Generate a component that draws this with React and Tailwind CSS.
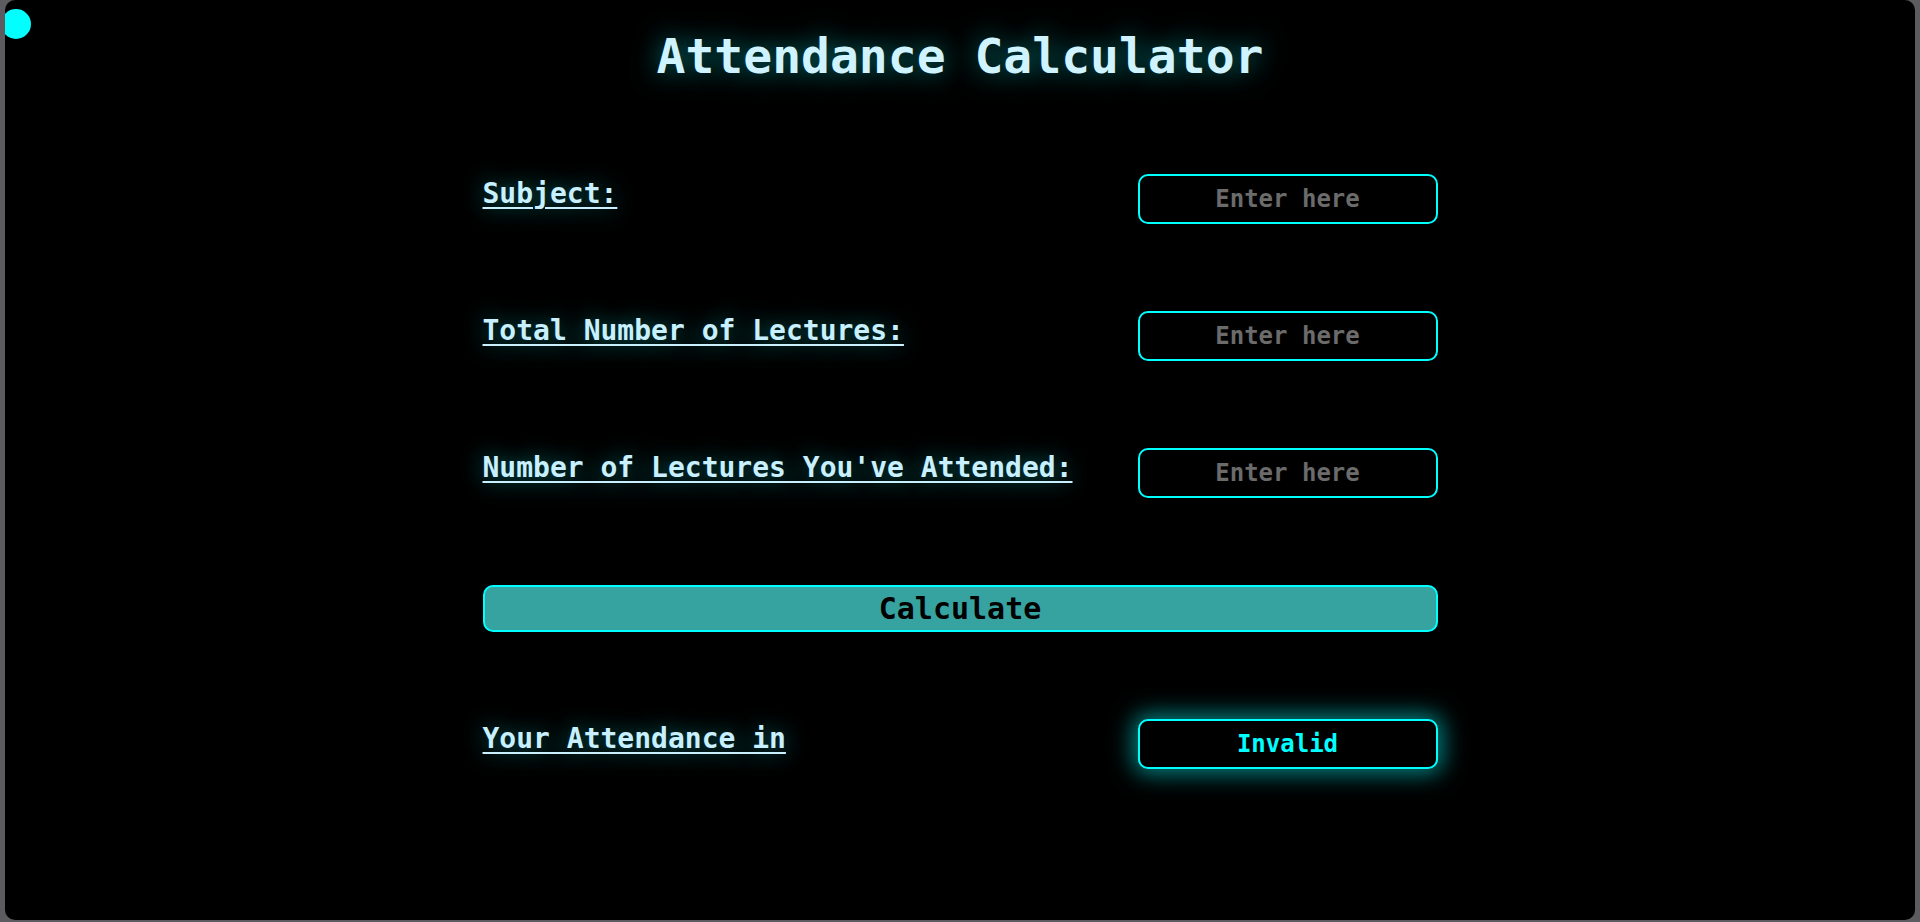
import React, { useState } from 'react'

const mono = { fontFamily: '"DejaVu Sans Mono", "Liberation Mono", monospace' }

function Field({ label, placeholder, value, onChange }) {
  return (
    <div className="flex items-start justify-between h-[50px]">
      <label className="pt-[3px] text-[28px] leading-[33px] font-semibold text-[#c8f0ff] underline decoration-2 underline-offset-[4px] [text-shadow:0_0_22px_rgba(0,255,255,0.45)]">
        {label}
      </label>
      <input
        value={value}
        onChange={(e) => onChange(e.target.value)}
        placeholder={placeholder}
        className="w-[300px] h-[50px] bg-black border-2 border-[#00ffff] rounded-[10px] text-center text-[24px] font-semibold text-[#c8f0ff] placeholder:text-[#6b6b6b] outline-none"
        style={mono}
      />
    </div>
  )
}

export default function App() {
  const [subject, setSubject] = useState('')
  const [total, setTotal] = useState('')
  const [attended, setAttended] = useState('')
  const [result, setResult] = useState('Invalid')

  const calculate = () => {
    const t = parseFloat(total)
    const a = parseFloat(attended)
    if (!t || isNaN(a) || a > t || a < 0) return setResult('Invalid')
    setResult(((a / t) * 100).toFixed(2) + '%')
  }

  return (
    <div className="min-h-screen bg-[#5b5b60] px-[5px] pb-[2px]" style={mono}>
      <div className="relative overflow-hidden h-[920px] bg-black rounded-[10px] flex flex-col items-center">
        {/* cursor dot */}
        <div className="absolute left-[-4px] top-[9px] w-[30px] h-[30px] rounded-full bg-[#00ffff]" />

        <h1 className="mt-[28px] h-[56px] text-[48px] leading-[56px] font-semibold text-[#cff3ff] [text-shadow:0_0_26px_rgba(0,255,255,0.5)]">
          Attendance Calculator
        </h1>

        <div className="w-1/2 mt-[90px] flex flex-col gap-[87px]">
          <Field label="Subject:" placeholder="Enter here" value={subject} onChange={setSubject} />
          <Field label="Total Number of Lectures:" placeholder="Enter here" value={total} onChange={setTotal} />
          <Field label="Number of Lectures You've Attended:" placeholder="Enter here" value={attended} onChange={setAttended} />

          <button
            onClick={calculate}
            className="w-full h-[47px] bg-[#36a3a0] border-2 border-[#00ffff] rounded-[10px] text-[30px] leading-none font-bold text-black"
            style={mono}
          >
            Calculate
          </button>

          <div className="flex items-start justify-between h-[50px]">
            <span className="pt-[3px] text-[28px] leading-[33px] font-semibold text-[#c8f0ff] underline decoration-2 underline-offset-[4px] [text-shadow:0_0_22px_rgba(0,255,255,0.45)]">
              Your Attendance in {subject}
            </span>
            <div className="w-[300px] h-[50px] flex items-center justify-center bg-black border-2 border-[#00ffff] rounded-[10px] text-[24px] font-bold text-[#00ffff] shadow-[0_0_22px_5px_rgba(0,255,255,0.5)]">
              {result}
            </div>
          </div>
        </div>
      </div>
    </div>
  )
}
